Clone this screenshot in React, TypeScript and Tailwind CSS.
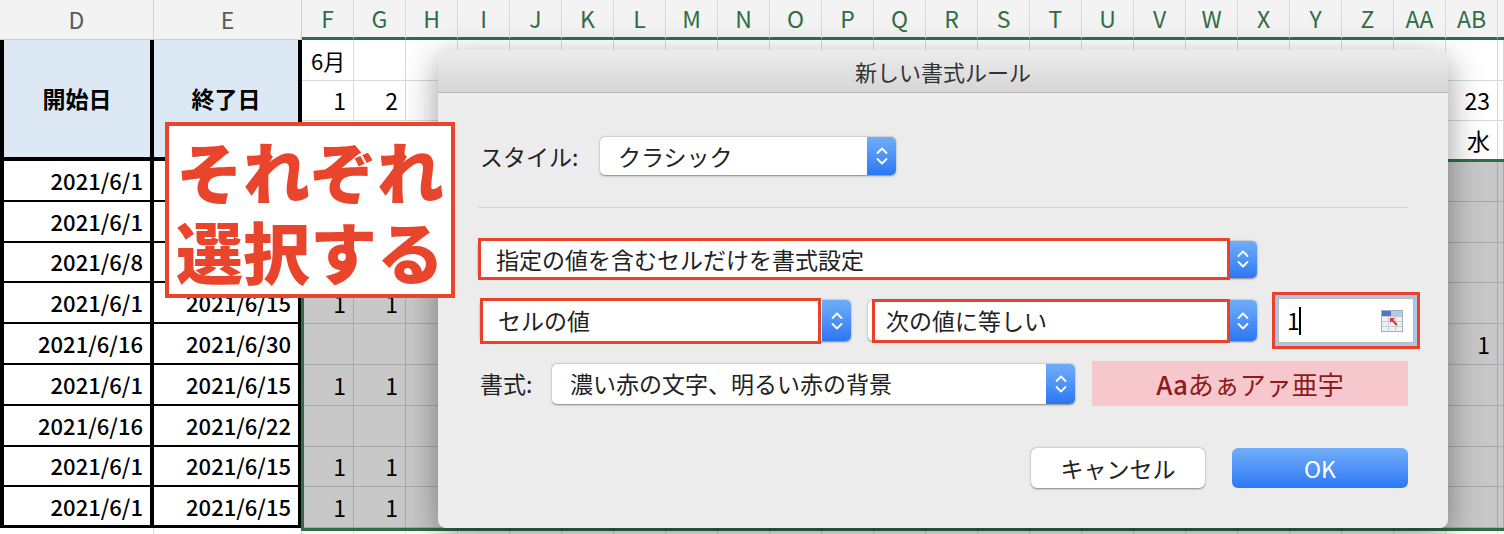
import React from 'react';

const COLS = ['F', 'G', 'H', 'I', 'J', 'K', 'L', 'M', 'N', 'O', 'P', 'Q', 'R', 'S', 'T', 'U', 'V', 'W', 'X', 'Y', 'Z', 'AA', 'AB'];
const WEEK = ['火', '水', '木', '金', '土', '日', '月'];

// start / end day of June 2021 for each task row
const TASKS = [
  { start: 1, end: 15 },
  { start: 1, end: 7 },
  { start: 8, end: 14 },
  { start: 1, end: 15 },
  { start: 16, end: 30 },
  { start: 1, end: 15 },
  { start: 16, end: 22 },
  { start: 1, end: 15 },
  { start: 1, end: 15 },
];

// cells under the dialog / callout are never seen, so only F, G and AB carry text
const shown = (i: number) => i === 0 || i === 1 || i === COLS.length - 1;

const jp = "font-['Noto_Sans_CJK_JP',sans-serif]";

const Chevrons: React.FC = () => (
  <svg width="14" height="26" viewBox="0 0 14 26" fill="none" stroke="white" strokeWidth="1.8" strokeLinecap="round" strokeLinejoin="round">
    <path d="M2.5 10 L7 5.5 L11.5 10" />
    <path d="M2.5 16 L7 20.5 L11.5 16" />
  </svg>
);

const Stepper: React.FC = () => (
  <div className="flex w-[29px] shrink-0 items-center justify-center self-stretch rounded-r-[5px] bg-gradient-to-b from-[#70adf9] to-[#2b77f3]">
    <Chevrons />
  </div>
);

const Select: React.FC<{ text: string; className: string; mark?: string }> = ({ text, className, mark }) => (
  <div className={`relative flex shrink-0 rounded-[5px] bg-white shadow-[0_0.5px_2px_rgba(0,0,0,0.45)] ${className}`}>
    <div className="flex flex-1 items-center pl-[18px] text-[23px] text-[#222]">{text}</div>
    <Stepper />
    {mark && <div className={`absolute border-[3px] border-[#e8432a] ${mark}`} />}
  </div>
);

const RangeIcon: React.FC = () => (
  <svg width="22" height="22" viewBox="0 0 22 22">
    <rect x="0.5" y="0.5" width="21" height="21" fill="#edf1f6" stroke="#a3afbf" />
    <rect x="1" y="1" width="9" height="5" fill="#4a7cc2" />
    <rect x="10" y="1" width="11" height="5" fill="#b7c9e2" />
    <path d="M0.5 6.5 H21.5 M0.5 11.5 H21.5 M0.5 16.5 H21.5 M7.5 6.5 V21.5 M14.5 6.5 V21.5" stroke="#c3ccd8" strokeWidth="1" />
    <path d="M16 15 L10.5 9.5" stroke="#d03a3f" strokeWidth="2.2" />
    <path d="M9 8 H14 L9 13 Z" fill="#d03a3f" />
  </svg>
);

export default function App() {
  const headerCell = `flex items-center justify-center bg-[#f3f3f3] text-[23px] ${jp}`;
  const white = 'border-r border-b border-[#d9d9d9] bg-white';
  const sel = 'border-r border-b border-[#a8a8a8] bg-[#c8c8c8]';
  const num = `flex items-center justify-end pr-[7px] text-[23px] text-black ${jp}`;

  return (
    <div className="relative h-[534px] w-[1504px] overflow-hidden bg-white">
      <div className="grid h-[534px] grid-cols-[154px_148px_repeat(23,52px)_1fr] grid-rows-[40px_41px_40px_40px_repeat(9,40.8px)_1fr]">
        {/* column letters */}
        <div className={`${headerCell} border-r border-b border-[#cfcfcf] text-[#5a5a5a]`}>D</div>
        <div className={`${headerCell} border-r border-b border-[#cfcfcf] text-[#5a5a5a]`}>E</div>
        {COLS.map(c => (
          <div key={c} className={`${headerCell} border-r border-r-[#d9d9d9] border-b-[3px] border-b-[#2f6e45] text-[#2f6e45]`}>{c}</div>
        ))}
        <div className="border-b-[3px] border-b-[#2f6e45] bg-[#f3f3f3]" />

        {/* merged headers */}
        <div className={`row-span-3 flex items-center justify-center border-l-[4px] border-r-[4px] border-b-[4px] border-black bg-[#dde8f5] text-[23px] font-bold text-black ${jp}`}>開始日</div>
        <div className={`row-span-3 flex items-center justify-center border-r-[4px] border-b-[4px] border-black bg-[#dde8f5] text-[23px] font-bold text-black ${jp}`}>終了日</div>

        {/* month row */}
        {COLS.map((c, i) => (
          <div key={`m-${c}`} className={`${white} flex items-center pl-[9px] text-[22px] ${jp}`}>{i === 0 ? '6月' : ''}</div>
        ))}
        <div className={white} />

        {/* day row */}
        {COLS.map((c, i) => (
          <div key={`d-${c}`} className={`${white} ${num}`}>{shown(i) ? i + 1 : ''}</div>
        ))}
        <div className={white} />

        {/* weekday row (F, G sit under the callout) */}
        {COLS.map((c, i) => (
          <div key={`w-${c}`} className={`${white} ${num}`}>{i === COLS.length - 1 ? WEEK[i % 7] : ''}</div>
        ))}
        <div className={white} />

        {/* tasks */}
        {TASKS.map((t, r) => {
          const last = r === TASKS.length - 1;
          const covered = r < 3;
          return (
            <React.Fragment key={`t-${r}`}>
              <div className={`flex items-center justify-end border-l-[4px] border-r-[4px] border-black pr-[7px] text-[22px] font-medium text-black ${jp} ${last ? 'border-b-[3px]' : 'border-b-2'}`}>2021/6/{t.start}</div>
              <div className={`flex items-center justify-end border-r-[4px] border-black pr-[7px] text-[22px] font-medium text-black ${jp} ${last ? 'border-b-[3px]' : 'border-b-2'}`}>{covered ? '' : `2021/6/${t.end}`}</div>
              {COLS.map((c, i) => (
                <div key={`c-${r}-${c}`} className={`${sel} ${num}`}>
                  {shown(i) && !covered && i + 1 >= t.start && i + 1 <= t.end ? '1' : ''}
                </div>
              ))}
              <div className={sel} />
            </React.Fragment>
          );
        })}

        {/* partial row at the bottom */}
        <div className="border-r border-[#d9d9d9]" />
        <div className="border-r border-[#d9d9d9]" />
        {COLS.map(c => (
          <div key={`b-${c}`} className="border-r border-[#d9d9d9]" />
        ))}
        <div />
      </div>

      {/* selection outline */}
      <div className="pointer-events-none absolute left-[301px] top-[159px] h-[372px] w-[1220px] border-[3px] border-[#2f6e45]" />

      {/* dialog */}
      <div className={`absolute left-[438px] top-[50px] flex h-[478px] w-[1010px] flex-col overflow-hidden rounded-[8px] bg-[#ececec] shadow-[0_10px_35px_rgba(0,0,0,0.4)] ${jp}`}>
        <div className="flex h-[43px] shrink-0 items-center justify-center border-b border-[#b8b8b8] bg-gradient-to-b from-[#ececec] to-[#d6d6d6] text-[22px] text-[#333]">
          新しい書式ルール
        </div>

        <div className="flex flex-col px-[40px] pt-[44px]">
          <div className="flex h-[38px] items-center">
            <div className="w-[122px] shrink-0 pl-[2px] text-[23px] text-[#222]">スタイル:</div>
            <Select text="クラシック" className="h-[38px] w-[296px]" />
          </div>

          <div className="mt-[32px] h-px bg-[#d2d2d2]" />

          <div className="mt-[30px] flex h-[42px] items-center">
            <Select text="指定の値を含むセルだけを書式設定" className="h-[37px] w-[779px]" mark="-top-[3px] -bottom-[2px] left-0 right-[27px]" />
          </div>

          <div className="mt-[12px] flex h-[57px] items-center">
            <Select text="セルの値" className="ml-[2px] h-[41px] w-[371px]" mark="-top-[2px] -bottom-[3px] left-0 right-[30px]" />
            <Select text="次の値に等しい" className="ml-[17px] h-[41px] w-[389px]" mark="-top-[1px] -bottom-[2px] left-[4px] right-[27px]" />
            <div className="ml-[15px] flex h-[57px] w-[148px] shrink-0 border-[3px] border-[#e8432a] bg-[#a9c7ee] p-[3px]">
              <div className="flex flex-1 items-center justify-between border border-[#b9b9b9] bg-white pl-[8px] pr-[10px]">
                <div className="flex items-center text-[23px] text-black">
                  1<span className="ml-[-1px] h-[28px] w-[2px] bg-black" />
                </div>
                <RangeIcon />
              </div>
            </div>
          </div>

          <div className="mt-[12px] flex h-[45px] items-center">
            <div className="w-[74px] shrink-0 pl-[2px] text-[23px] text-[#222]">書式:</div>
            <Select text="濃い赤の文字、明るい赤の背景" className="h-[40px] w-[523px]" />
            <div className="ml-[17px] flex h-[45px] w-[316px] shrink-0 items-center justify-center bg-[#f6c8ce] text-[26px] text-[#8f1a1a]">
              <span className="font-medium">Aa</span>あぁアァ亜宇
            </div>
          </div>

          <div className="mt-[42px] flex h-[40px] justify-end gap-[27px]">
            <div className="flex w-[174px] items-center justify-center rounded-[6px] bg-white text-[23px] text-[#222] shadow-[0_0.5px_2px_rgba(0,0,0,0.45)]">キャンセル</div>
            <div className="flex w-[176px] items-center justify-center rounded-[6px] bg-gradient-to-b from-[#72aef8] to-[#2c78f4] text-[23px] text-white">OK</div>
          </div>
        </div>
      </div>

      {/* callout, lies over the dialog */}
      <div className={`absolute left-[165px] top-[122px] flex h-[176px] w-[290px] flex-col items-center justify-center border-[4px] border-[#e9452d] bg-white text-[67px] font-black leading-[80px] text-[#e9452d] ${jp}`}>
        <div>それぞれ</div>
        <div>選択する</div>
      </div>
    </div>
  );
}
